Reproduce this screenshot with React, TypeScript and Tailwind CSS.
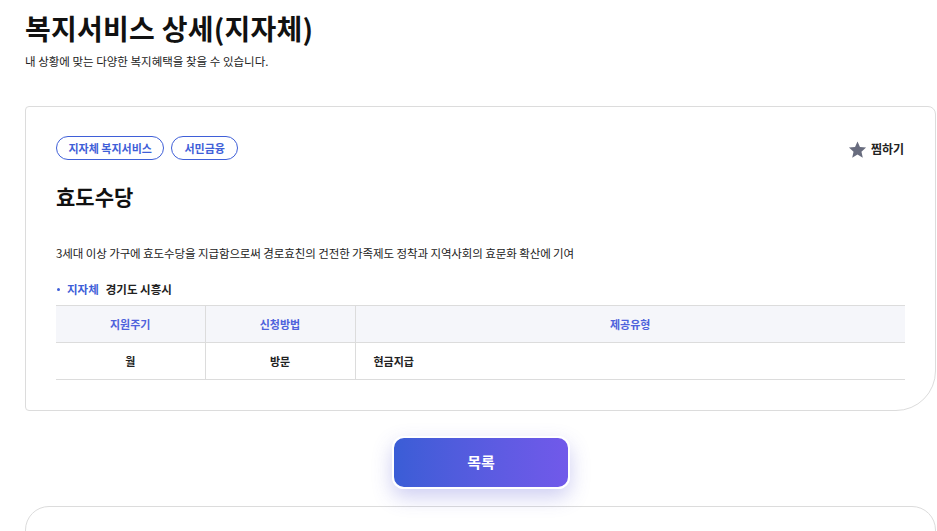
const FONT = { fontFamily: '"Noto Sans CJK KR", "Noto Sans", sans-serif' };

function StarIcon() {
    return (
        <svg className="w-[19px] h-[19px] text-[#686c7e]" viewBox="0 0 24 24" fill="currentColor">
            <path d="M12 1.8l3.1 7.1 7.7.7-5.8 5.1 1.7 7.6L12 18.3l-6.7 4 1.7-7.6-5.8-5.1 7.7-.7z" />
        </svg>
    );
}

export default function App() {
    return (
        <div className="w-[937px] h-[531px] bg-white text-[#111] overflow-hidden" style={FONT}>
            <div className="pl-[25px] pt-[11px]">
                {/* 타이틀 */}
                <h1 className="text-[28px] leading-[34px] font-bold tracking-[0.25px] text-[#111]">
                    복지서비스 상세(지자체)
                </h1>
                <p className="mt-[8px] text-[11.5px] leading-[16px] text-[#222]">
                    내 상황에 맞는 다양한 복지혜택을 찾을 수 있습니다.
                </p>

                {/* 상세 카드 */}
                <div className="mt-[37px] w-[911px] h-[305px] border border-[#dcdcdc] rounded-tl-[4px] rounded-tr-[8px] rounded-bl-[4px] rounded-br-[40px] px-[30px] pt-[29px]">
                    <div className="flex items-center justify-between">
                        <div className="flex gap-[7px]">
                            <span className="h-[24px] px-[11.5px] flex items-center rounded-full border border-[#3f5fd8] text-[11px] font-bold text-[#3f5fd8]">
                                지자체 복지서비스
                            </span>
                            <span className="h-[24px] px-[12px] flex items-center rounded-full border border-[#3f5fd8] text-[11px] font-bold text-[#3f5fd8]">
                                서민금융
                            </span>
                        </div>
                        <button className="flex items-center gap-[4px] mr-[1px] mt-[2px] text-[12px] font-bold text-[#222]">
                            <StarIcon />
                            찜하기
                        </button>
                    </div>

                    <h2 className="mt-[22px] text-[21px] leading-[28px] font-bold">효도수당</h2>

                    <p className="mt-[35px] text-[11.5px] leading-[16px] tracking-[-0.1px] text-[#222]">
                        3세대 이상 가구에 효도수당을 지급함으로써 경로효친의 건전한 가족제도 정착과 지역사회의 효문화 확산에 기여
                    </p>

                    <div className="mt-[20px] flex items-center text-[11.5px] font-bold">
                        <span className="w-[3px] h-[3px] rounded-full bg-[#3f5fd8] ml-[1px] mr-[7px]"></span>
                        <span className="text-[#3f5fd8]">지자체</span>
                        <span className="ml-[7px] text-[#222]">경기도 시흥시</span>
                    </div>

                    {/* 정보 테이블 */}
                    <table className="mt-[7px] w-full border-collapse text-[11px]">
                        <thead>
                            <tr className="bg-[#f5f6fa] border-t border-b border-[#dcdcdc] h-[37px]">
                                <th className="w-[149px] border-r border-[#dcdcdc] font-bold text-[#4e62dc]">지원주기</th>
                                <th className="w-[150px] border-r border-[#dcdcdc] font-bold text-[#4e62dc]">신청방법</th>
                                <th className="font-bold text-[#4e62dc]">제공유형</th>
                            </tr>
                        </thead>
                        <tbody>
                            <tr className="border-b border-[#dcdcdc] h-[37px]">
                                <td className="border-r border-[#dcdcdc] text-center font-bold text-[#222]">월</td>
                                <td className="border-r border-[#dcdcdc] text-center font-bold text-[#222]">방문</td>
                                <td className="pl-[18px] font-bold text-[#222]">현금지급</td>
                            </tr>
                        </tbody>
                    </table>
                </div>

                {/* 목록 버튼 */}
                <div className="w-[911px] flex justify-center mt-[25px]">
                    <button className="ml-[1px] w-[178px] h-[53px] rounded-[12px] border-2 border-white bg-gradient-to-r from-[#3a5dd6] to-[#7159ea] text-white text-[15px] font-bold shadow-[0_8px_20px_rgba(80,80,210,0.28)]">
                        목록
                    </button>
                </div>

                {/* 하단 카드 */}
                <div className="mt-[17px] w-[911px] h-[60px] border border-[#dcdcdc] rounded-t-[24px]"></div>
            </div>
        </div>
    );
}
